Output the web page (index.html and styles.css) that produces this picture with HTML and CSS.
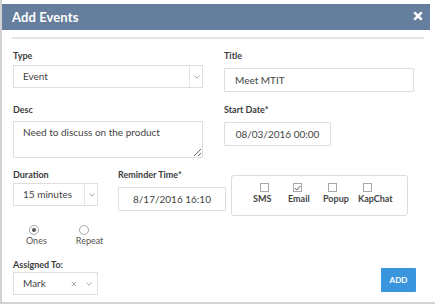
FILE: index.html
```html
<!DOCTYPE html>
<html>
<head>
<meta charset="utf-8">
<link rel="stylesheet" href="styles.css">
</head>
<body>
<div class="modal">
  <div class="header">
    <span class="header-title">Add Events</span>
    <svg class="close" width="10" height="10" viewBox="0 0 10 10"><path d="M1.3 1.3L8.7 8.7M8.7 1.3L1.3 8.7" stroke="#fff" stroke-width="2.6" stroke-linecap="butt"/></svg>
  </div>
  <div class="rule"></div>
  <div class="form">
    <div class="row row1">
      <div class="field col">
        <div class="label">Type</div>
        <div class="select type-select">
          <div class="select-value">Event</div>
          <div class="select-arrow"><svg width="6" height="4" viewBox="0 0 6 4"><polyline points="0.5,0.5 3,3.2 5.5,0.5" fill="none" stroke="#a0a0a0" stroke-width="0.9"/></svg></div>
        </div>
      </div>
      <div class="field col">
        <div class="label">Title</div>
        <input class="input title-input" type="text" value="Meet MTIT">
      </div>
    </div>
    <div class="row row2">
      <div class="field col">
        <div class="label">Desc</div>
        <textarea class="textarea">Need to discuss on the product</textarea>
      </div>
      <div class="field col">
        <div class="label">Start Date*</div>
        <input class="input date-input center" type="text" value="08/03/2016 00:00">
      </div>
    </div>
    <div class="row row3">
      <div class="field duration">
        <div class="label">Duration</div>
        <div class="select duration-select">
          <div class="select-value">15 minutes</div>
          <div class="select-arrow"><svg width="6" height="4" viewBox="0 0 6 4"><polyline points="0.5,0.5 3,3.2 5.5,0.5" fill="none" stroke="#a0a0a0" stroke-width="0.9"/></svg></div>
        </div>
      </div>
      <div class="field reminder">
        <div class="label">Reminder Time*</div>
        <input class="input reminder-input center" type="text" value="8/17/2016 16:10">
      </div>
      <div class="checkgroup">
        <div class="check-item"><span class="checkbox"></span><span class="check-label">SMS</span></div>
        <div class="check-item"><span class="checkbox checked"><svg width="7" height="6" viewBox="0 0 7 6"><polyline points="0.8,3 2.8,5 6.3,1" fill="none" stroke="#555" stroke-width="1"/></svg></span><span class="check-label">Email</span></div>
        <div class="check-item"><span class="checkbox"></span><span class="check-label">Popup</span></div>
        <div class="check-item"><span class="checkbox"></span><span class="check-label">KapChat</span></div>
      </div>
    </div>
    <div class="row radios">
      <div class="radio-item ones"><span class="radio checked"></span><span class="radio-label">Ones</span></div>
      <div class="radio-item repeat"><span class="radio"></span><span class="radio-label">Repeat</span></div>
    </div>
    <div class="row last">
      <div class="field">
        <div class="label">Assigned To:</div>
        <div class="select assign-select">
          <div class="select-value">Mark</div>
          <svg class="clear" width="6" height="6" viewBox="0 0 6 6"><path d="M0.8 0.8L5.2 5.2M5.2 0.8L0.8 5.2" stroke="#a0a0a0" stroke-width="0.9"/></svg>
          <svg class="assign-chev" width="6" height="4" viewBox="0 0 6 4"><polyline points="0.5,0.5 3,3.2 5.5,0.5" fill="none" stroke="#a0a0a0" stroke-width="0.9"/></svg>
        </div>
      </div>
      <button class="add-btn">ADD</button>
    </div>
  </div>
</div>
</body>
</html>
```
FILE: styles.css
```css
html, body {
  margin: 0;
  padding: 0;
  background: #fff;
}
body {
  font-family: "Lato", "Open Sans", sans-serif;
  color: #444;
}
.modal {
  width: 435px;
  height: 304px;
  box-sizing: border-box;
  border-left: 2px solid #d2d2d2;
  border-bottom: 2px solid #d2d2d2;
  display: flex;
  flex-direction: column;
}
.header {
  margin: 4px 5px 0 0;
  height: 26px;
  background: #667e9d;
  display: flex;
  align-items: center;
  justify-content: space-between;
  padding: 0 7px 0 10px;
}
.header-title {
  color: #fff;
  font-size: 13px;
  font-weight: 700;
  letter-spacing: 0.1px;
}
.close {
  display: block;
  margin-top: -2px;
}
.rule {
  margin: 7px 11px 0 10px;
  height: 2px;
  background: #e4e4e4;
}
.form {
  padding: 11px 21px 0 11px;
}
.row {
  display: flex;
  align-items: flex-start;
}
.col {
  width: 190px;
  display: flex;
  flex-direction: column;
}
.row1 .col + .col,
.row2 .col + .col {
  margin-left: 21px;
}
.label {
  font-size: 9px;
  line-height: 12px;
  height: 12px;
  font-weight: 700;
  color: #3c3c3c;
}
.select {
  display: flex;
  box-sizing: border-box;
  height: 23px;
  border: 1px solid #dedede;
  background: #fff;
  align-items: stretch;
}
.select-value {
  flex: 1;
  padding-left: 9px;
  font-size: 10px;
  line-height: 21px;
  color: #444;
}
.select-arrow {
  width: 12px;
  border-left: 1px solid #e4e4e4;
  display: flex;
  align-items: center;
  justify-content: center;
}
.select-arrow svg {
  display: block;
  margin-left: 1px;
}
.type-select {
  margin-top: 3px;
}
.input {
  display: block;
  box-sizing: border-box;
  height: 24px;
  border: 1px solid #dedede;
  border-radius: 1px;
  padding: 0 0 0 10px;
  margin: 6px 0 0 0;
  font-family: inherit;
  font-size: 10px;
  color: #444;
  background: #fff;
  outline: none;
}
.input.center {
  text-align: center;
  padding: 0;
}
.title-input {
  width: 190px;
}
.row2 {
  margin-top: 12px;
}
.textarea {
  display: block;
  box-sizing: border-box;
  width: 190px;
  height: 37px;
  margin: 5px 0 0 0;
  border: 1px solid #dedede;
  border-radius: 1px;
  padding: 4px 9px;
  font-family: inherit;
  font-size: 10px;
  line-height: 12px;
  color: #444;
  outline: none;
}
.date-input {
  width: 107px;
}
.row3 {
  margin-top: 11px;
}
.duration {
  width: 85px;
  display: flex;
  flex-direction: column;
}
.duration-select {
  margin-top: 2px;
}
.reminder {
  width: 108px;
  margin-left: 20px;
  display: flex;
  flex-direction: column;
}
.reminder-input {
  width: 108px;
}
.checkgroup {
  margin: 6px 0 0 5px;
  width: 177px;
  height: 41px;
  box-sizing: border-box;
  border: 1px solid #dcdcdc;
  border-radius: 3px;
  display: flex;
  padding: 7px 0 0 21px;
}
.check-item {
  width: 35px;
  display: flex;
  flex-direction: column;
  align-items: flex-start;
}
.checkbox {
  width: 9px;
  height: 9px;
  box-sizing: border-box;
  border: 1px solid #a8a8a8;
  margin-left: 5px;
  display: flex;
  align-items: center;
  justify-content: center;
  background: #fff;
}
.check-item:first-child .checkbox {
  margin-left: 7px;
}
.checkbox svg {
  display: block;
}
.check-label {
  margin-top: 2px;
  font-size: 9px;
  line-height: 10px;
  font-weight: 700;
  color: #444;
}
.radios {
  margin-top: 9px;
  padding-left: 13px;
}
.radio-item {
  display: flex;
  flex-direction: column;
  align-items: flex-start;
}
.repeat {
  margin-left: 29px;
}
.radio {
  width: 10px;
  height: 10px;
  box-sizing: border-box;
  border: 1px solid #a8a8a8;
  border-radius: 50%;
  margin-left: 3px;
  display: flex;
  align-items: center;
  justify-content: center;
}
.radio.checked::after {
  content: "";
  width: 4px;
  height: 4px;
  border-radius: 50%;
  background: #555;
}
.radio-label {
  margin-top: 1px;
  font-size: 9px;
  line-height: 10px;
  color: #555;
}
.last {
  margin-top: 13px;
  justify-content: space-between;
  align-items: flex-end;
}
.assign-select {
  margin-top: 1px;
  width: 85px;
  align-items: center;
}
.clear {
  display: block;
  margin-right: 9px;
}
.assign-chev {
  display: block;
  margin-right: 5px;
}
.add-btn {
  width: 35px;
  height: 24px;
  margin: 0 -2px 3px 0;
  padding: 0;
  border: none;
  border-radius: 1px;
  background: #3a96dc;
  color: #fff;
  font-family: inherit;
  font-size: 8px;
  font-weight: 700;
  letter-spacing: 0.1px;
}
```
